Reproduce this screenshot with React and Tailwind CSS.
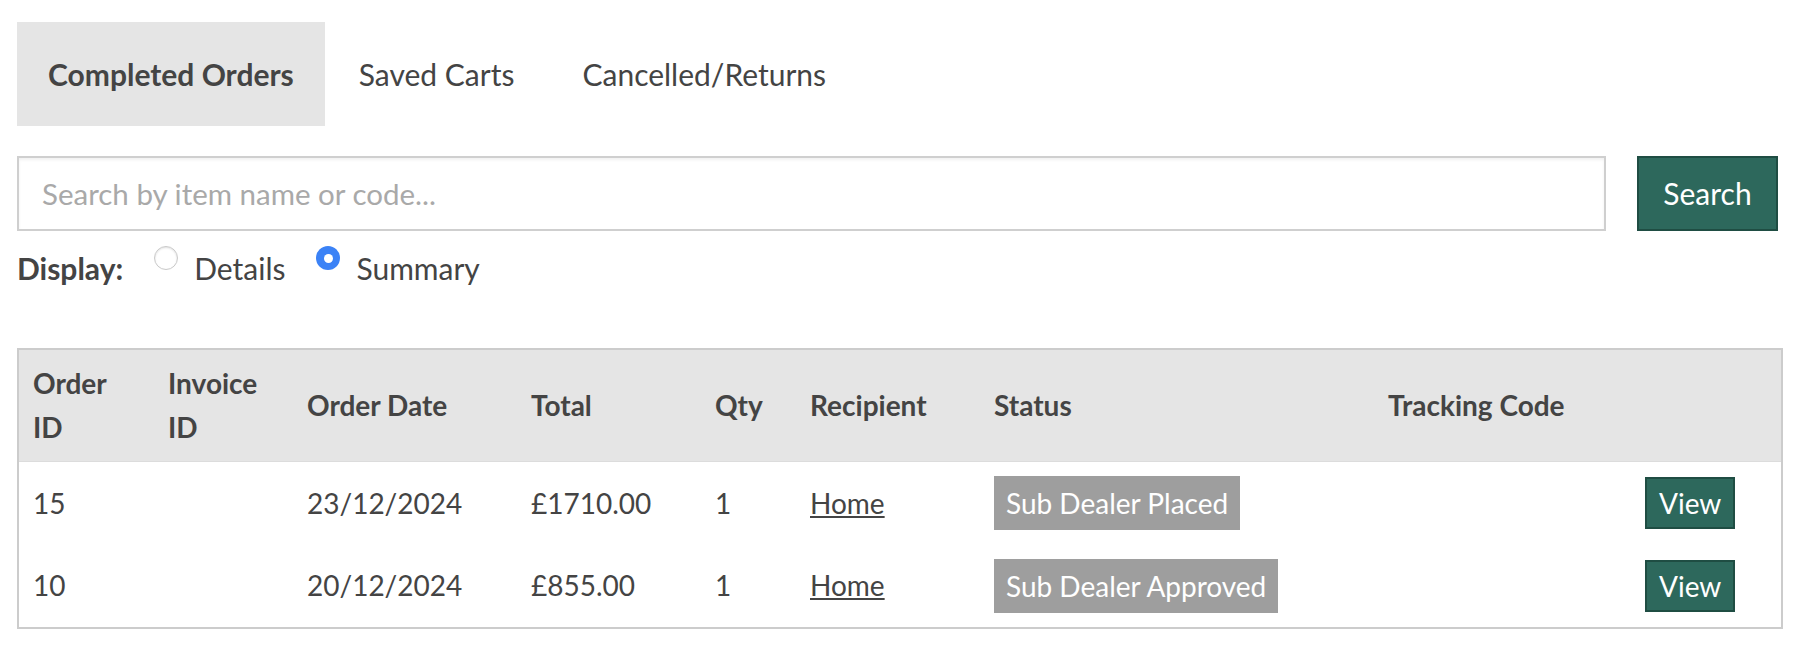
import React, { useState } from 'react';

const orders = [
  { id: 15, invoice: '', date: '23/12/2024', total: '£1710.00', qty: 1, recipient: 'Home', status: 'Sub Dealer Placed', tracking: '' },
  { id: 10, invoice: '', date: '20/12/2024', total: '£855.00', qty: 1, recipient: 'Home', status: 'Sub Dealer Approved', tracking: '' },
];

const tabs = ['Completed Orders', 'Saved Carts', 'Cancelled/Returns'];

function Radio({ checked, onClick }) {
  return (
    <span
      onClick={onClick}
      className={
        checked
          ? 'w-[24px] h-[24px] rounded-full bg-[#3b82f6] flex items-center justify-center shrink-0 cursor-pointer'
          : 'w-[24px] h-[24px] rounded-full bg-white border border-[#c9c9c9] shadow-[inset_0_1px_2px_rgba(0,0,0,0.12)] shrink-0 cursor-pointer'
      }
    >
      {checked && <span className="w-[9px] h-[9px] rounded-full bg-white" />}
    </span>
  );
}

export default function App() {
  const [tab, setTab] = useState(0);
  const [display, setDisplay] = useState('summary');

  return (
    <div className="min-h-screen bg-white font-['Lato',sans-serif] text-[#444444] px-[17px] pt-[22px]">
      {/* tabs */}
      <div className="flex">
        {tabs.map((t, i) => (
          <button
            key={t}
            onClick={() => setTab(i)}
            className={
              i === tab
                ? 'h-[104px] px-[31px] bg-[#e5e5e5] text-[30px] font-bold leading-[45px]'
                : 'h-[104px] px-[34px] text-[30px] leading-[45px]'
            }
          >
            {t}
          </button>
        ))}
      </div>

      {/* search */}
      <div className="flex mt-[30px] gap-[31px]">
        <input
          type="text"
          placeholder="Search by item name or code..."
          className="w-[1589px] h-[75px] border-2 border-[#cfcfcf] shadow-[inset_0_2px_3px_rgba(0,0,0,0.06)] px-[23px] text-[29.5px] outline-none placeholder:text-[#a9a9a9]"
        />
        <button className="w-[141px] h-[75px] bg-[#2d685c] border-2 border-[#1f4d43] text-white text-[30px]">
          Search
        </button>
      </div>

      {/* display toggle */}
      <div className="flex items-start mt-[15px] text-[30px] leading-[45px]">
        <span className="font-bold mr-[31px]">Display:</span>
        <Radio checked={display === 'details'} onClick={() => setDisplay('details')} />
        <span className="ml-[16px] mr-[31px]">Details</span>
        <Radio checked={display === 'summary'} onClick={() => setDisplay('summary')} />
        <span className="ml-[16px]">Summary</span>
      </div>

      {/* orders table */}
      <table className="mt-[57px] w-[1764px] table-fixed border-2 border-[#cccccc] text-[28px] leading-[43.5px]">
        <colgroup>
          <col className="w-[136px]" />
          <col className="w-[139px]" />
          <col className="w-[224px]" />
          <col className="w-[184px]" />
          <col className="w-[95px]" />
          <col className="w-[184px]" />
          <col className="w-[394px]" />
          <col className="w-[257px]" />
          <col className="w-[151px]" />
        </colgroup>
        <thead className="bg-[#e5e5e5] border-b border-[#dcdcdc]">
          <tr className="text-left font-bold">
            <th className="px-[14px] py-[12px] align-middle">Order ID</th>
            <th className="px-[14px] py-[12px] align-middle">Invoice ID</th>
            <th className="px-[14px] py-[12px] align-middle">Order Date</th>
            <th className="px-[14px] py-[12px] align-middle">Total</th>
            <th className="px-[14px] py-[12px] align-middle">Qty</th>
            <th className="px-[14px] py-[12px] align-middle">Recipient</th>
            <th className="px-[14px] py-[12px] align-middle">Status</th>
            <th className="px-[14px] py-[12px] align-middle">Tracking Code</th>
            <th className="px-[14px] py-[12px] align-middle"></th>
          </tr>
        </thead>
        <tbody>
          {orders.map((o) => (
            <tr key={o.id} className="h-[83px]">
              <td className="px-[14px] align-middle">{o.id}</td>
              <td className="px-[14px] align-middle">{o.invoice}</td>
              <td className="px-[14px] align-middle">{o.date}</td>
              <td className="px-[14px] align-middle">{o.total}</td>
              <td className="px-[14px] align-middle">{o.qty}</td>
              <td className="px-[14px] align-middle">
                <a href="#" className="underline">{o.recipient}</a>
              </td>
              <td className="px-[14px] align-middle">
                <span className="inline-block bg-[#9e9e9e] text-white px-[12px] py-[5px] leading-[44px]">
                  {o.status}
                </span>
              </td>
              <td className="px-[14px] align-middle">{o.tracking}</td>
              <td className="px-[14px] align-middle">
                <button className="bg-[#2d685c] border-2 border-[#1f4d43] text-white px-[12px] py-[2px] leading-[44px]">
                  View
                </button>
              </td>
            </tr>
          ))}
        </tbody>
      </table>
    </div>
  );
}
